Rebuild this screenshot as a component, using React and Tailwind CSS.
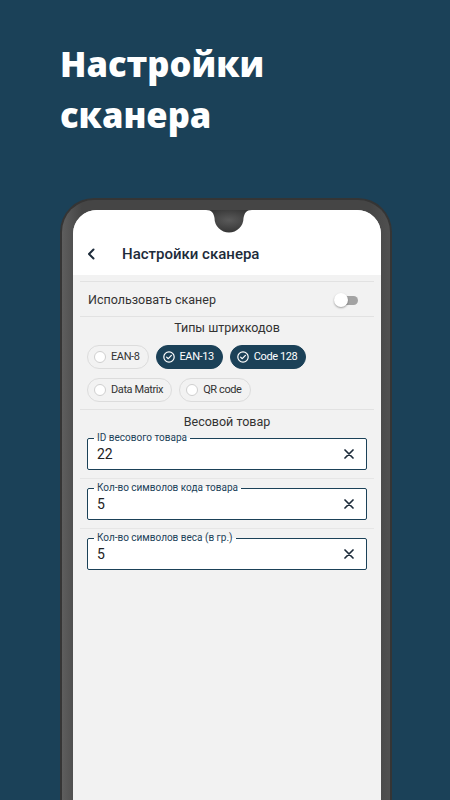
import React from "react";

function Chip({ label, selected }) {
  return (
    <div
      className={
        "h-[24px] rounded-full flex items-center gap-[5px] pl-[6px] pr-[8px] text-[11px] tracking-[-0.4px] " +
        (selected
          ? "bg-[#1b4158] text-white border border-[#1b4158]"
          : "bg-[#f2f2f2] text-[#333] border border-[#dcdcdc]")
      }
    >
      {selected ? (
        <svg width="12" height="12" viewBox="0 0 12 12" fill="none">
          <circle cx="6" cy="6" r="5.2" stroke="white" strokeWidth="1.2" />
          <path d="M3.6 6.1 L5.3 7.7 L8.4 4.4" stroke="white" strokeWidth="1.2" strokeLinecap="round" strokeLinejoin="round" />
        </svg>
      ) : (
        <span className="block w-[12px] h-[12px] rounded-full border border-[#cfcfcf] bg-white" />
      )}
      <span>{label}</span>
    </div>
  );
}

function Field({ label, value }) {
  return (
    <fieldset className="mx-[7px] border-[1.3px] border-[#1b4158] rounded-[2px] bg-white pl-[9px] pr-[12px] pb-[5px] flex items-center">
      <legend className="ml-[-3px] px-[3px] text-[10px] leading-[12px] text-[#1b4158]">{label}</legend>
      <div className="flex-1 flex items-center justify-between h-[20px]">
        <span className="text-[14px] text-[#222]">{value}</span>
        <svg width="10" height="10" viewBox="0 0 10 10">
          <path d="M1 1 L9 9 M9 1 L1 9" stroke="#1d2b3a" strokeWidth="1.7" strokeLinecap="round" />
        </svg>
      </div>
    </fieldset>
  );
}

export default function App() {
  return (
    <div
      className="w-[450px] h-[800px] overflow-hidden bg-[#1b4158] flex flex-col"
      style={{ fontFamily: "Roboto, 'Noto Sans', sans-serif" }}
    >
      <h1
        className="pl-[60px] pt-[38px] text-[34.5px] leading-[51px] font-extrabold text-white"
        style={{ fontFamily: "'Open Sans', 'Noto Sans', sans-serif" }}
      >
        Настройки
        <br />
        сканера
      </h1>
      <div className="relative ml-[60px] mt-[58px] w-[332px] flex-1 rounded-t-[34px] border-[2px] border-b-0 border-[#353535] bg-[linear-gradient(to_right,#5e5e5e,#454545_6%,#454545_94%,#505050)] pt-[10px] pl-[11px] pr-[9px] flex flex-col">
        <svg className="absolute left-[144px] top-[10px]" width="46" height="24" viewBox="0 0 46 24">
          <defs>
            <radialGradient id="ng" cx="0.5" cy="0.45" r="0.6">
              <stop offset="0" stopColor="#5a5a5a" />
              <stop offset="1" stopColor="#333" />
            </radialGradient>
          </defs>
          <path d="M0 0 H46 C40 0 38.5 3 37.5 8 A14.5 14.5 0 0 1 8.5 8 C7.5 3 6 0 0 0 Z" fill="url(#ng)" />
        </svg>
        <div className="flex-1 rounded-t-[24px] bg-[#f2f2f2] overflow-hidden flex flex-col">
          <div className="h-[65px] bg-white pt-[33px] flex items-start">
            <div className="h-[22px] flex items-center pl-[14px]">
              <svg width="9" height="12" viewBox="0 0 9 12">
                <path d="M6.5 1.5 L2 6 L6.5 10.5" stroke="#1d2b3a" strokeWidth="2" fill="none" strokeLinecap="round" strokeLinejoin="round" />
              </svg>
              <span className="ml-[26px] text-[15px] font-medium text-[#1d2b3a]">Настройки сканера</span>
            </div>
          </div>
          <div className="pt-[6px] px-[7px] flex flex-col">
            <div className="h-[36px] border-y border-[#e2e2e2] flex items-center justify-between pl-[8px] pr-[16px]">
              <span className="text-[12.5px] text-[#333] pt-[3px]">Использовать сканер</span>
              <div className="relative w-[24px] h-[14px] flex items-center mt-[2px]">
                <div className="absolute right-0 w-[20px] h-[9px] rounded-full bg-[#a3a3a3]" />
                <div className="absolute left-0 w-[14px] h-[14px] rounded-full bg-white shadow-[0_1px_2px_rgba(0,0,0,0.35)]" />
              </div>
            </div>
            <div className="border-b border-[#e2e2e2] pt-[2px] pb-[7px]">
              <div className="text-center text-[12.5px] leading-[18px] text-[#333]">Типы штрихкодов</div>
              <div className="mt-[8px] px-[7px] flex flex-wrap gap-x-[7px] gap-y-[9px]">
                <Chip label="EAN-8" />
                <Chip label="EAN-13" selected />
                <Chip label="Code 128" selected />
                <Chip label="Data Matrix" />
                <Chip label="QR code" />
              </div>
            </div>
            <div className="pt-[3px] pb-[8px] border-b border-[#e6e6e6]">
              <div className="text-center text-[12.5px] leading-[18px] text-[#333]">Весовой товар</div>
              <div className="mt-[1px]">
                <Field label="ID весового товара" value="22" />
              </div>
            </div>
            <div className="pt-[3px] pb-[8px] border-b border-[#e6e6e6]">
              <Field label="Кол-во символов кода товара" value="5" />
            </div>
            <div className="pt-[3px] pb-[8px]">
              <Field label="Кол-во символов веса (в гр.)" value="5" />
            </div>
          </div>
        </div>
      </div>
    </div>
  );
}
